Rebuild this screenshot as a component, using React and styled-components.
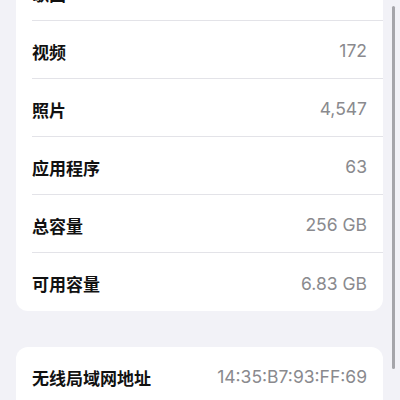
import React from 'react'
import styled, { createGlobalStyle } from 'styled-components'

const GlobalStyle = createGlobalStyle`
  html, body {
    margin: 0;
    padding: 0;
    background: #f2f2f7;
    overflow: hidden;
  }
`

const storageRows = [
  { label: '歌曲', value: '0' },
  { label: '视频', value: '172' },
  { label: '照片', value: '4,547' },
  { label: '应用程序', value: '63' },
  { label: '总容量', value: '256 GB' },
  { label: '可用容量', value: '6.83 GB' },
]

const networkRows = [
  { label: '无线局域网地址', value: '14:35:B7:93:FF:69' },
  { label: '蓝牙', value: '14:35:B7:8E:4D:21' },
]

const Page = styled.div`
  width: 400px;
  height: 400px;
  position: relative;
  overflow: hidden;
  background: #f2f2f7;
  font-family: Inter, "Noto Sans CJK SC", sans-serif;
`

const Content = styled.div`
  display: flex;
  flex-direction: column;
  gap: 36px;
  padding: 0 16px;
  margin-top: -37px;
`

const Card = styled.div`
  width: 367px;
  background: #ffffff;
  border-radius: 12px;
  padding-left: 16px;
  box-sizing: border-box;
  overflow: hidden;
`

const Row = styled.div`
  height: 58px;
  display: flex;
  align-items: center;
  justify-content: space-between;
  padding-right: 16px;
  box-sizing: border-box;
  border-bottom: ${({ $last }) => ($last ? 'none' : '1px solid #e3e3e8')};
`

const Label = styled.span`
  font-family: "Noto Sans CJK SC", sans-serif;
  font-size: 17px;
  font-weight: 600;
  color: #111111;
  padding-top: 3px;
`

const Value = styled.span`
  font-family: Inter, "Noto Sans CJK SC", sans-serif;
  font-size: 17.5px;
  color: #8a8a8e;
  padding-top: 2px;
`

const Scrollbar = styled.div`
  position: absolute;
  right: 5px;
  top: 6px;
  width: 3px;
  height: 363px;
  border-radius: 2px;
  background: #a5a5aa;
`

const InfoCard = ({ rows }) => (
  <Card>
    {rows.map((r, i) => (
      <Row key={r.label} $last={i === rows.length - 1}>
        <Label>{r.label}</Label>
        <Value>{r.value}</Value>
      </Row>
    ))}
  </Card>
)

export default function App() {
  return (
    <Page>
      <GlobalStyle />
      <Content>
        <InfoCard rows={storageRows} />
        <InfoCard rows={networkRows} />
      </Content>
      <Scrollbar />
    </Page>
  )
}
